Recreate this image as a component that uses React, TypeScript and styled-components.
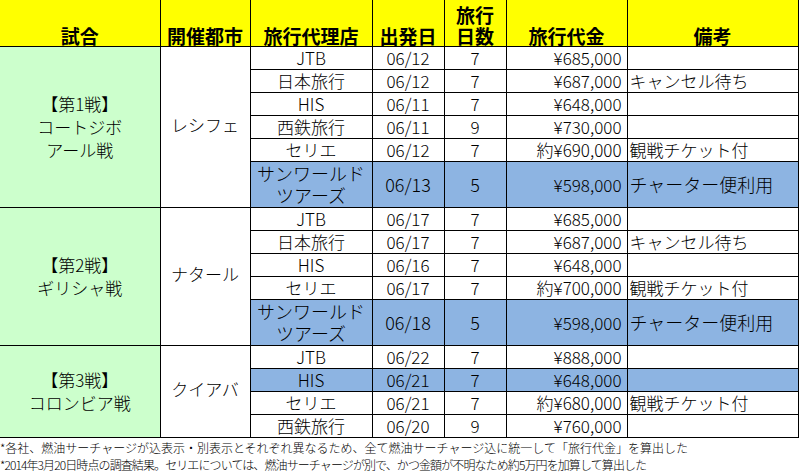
import { createGlobalStyle } from "styled-components";
import styled from "styled-components";

type TourRow = {
  agency: string[];
  date: string;
  days: string;
  price: string;
  note?: string;
  highlight?: boolean;
};

type MatchGroup = {
  match: string[];
  city: string;
  rows: TourRow[];
};

const groups: MatchGroup[] = [
  {
    match: ["【第1戦】", "コートジボ", "アール戦"],
    city: "レシフェ",
    rows: [
      { agency: ["JTB"], date: "06/12", days: "7", price: "¥685,000" },
      { agency: ["日本旅行"], date: "06/12", days: "7", price: "¥687,000", note: "キャンセル待ち" },
      { agency: ["HIS"], date: "06/11", days: "7", price: "¥648,000" },
      { agency: ["西鉄旅行"], date: "06/11", days: "9", price: "¥730,000" },
      { agency: ["セリエ"], date: "06/12", days: "7", price: "約¥690,000", note: "観戦チケット付" },
      {
        agency: ["サンワールド", "ツアーズ"],
        date: "06/13",
        days: "5",
        price: "¥598,000",
        note: "チャーター便利用",
        highlight: true,
      },
    ],
  },
  {
    match: ["【第2戦】", "ギリシャ戦"],
    city: "ナタール",
    rows: [
      { agency: ["JTB"], date: "06/17", days: "7", price: "¥685,000" },
      { agency: ["日本旅行"], date: "06/17", days: "7", price: "¥687,000", note: "キャンセル待ち" },
      { agency: ["HIS"], date: "06/16", days: "7", price: "¥648,000" },
      { agency: ["セリエ"], date: "06/17", days: "7", price: "約¥700,000", note: "観戦チケット付" },
      {
        agency: ["サンワールド", "ツアーズ"],
        date: "06/18",
        days: "5",
        price: "¥598,000",
        note: "チャーター便利用",
        highlight: true,
      },
    ],
  },
  {
    match: ["【第3戦】", "コロンビア戦"],
    city: "クイアバ",
    rows: [
      { agency: ["JTB"], date: "06/22", days: "7", price: "¥888,000" },
      { agency: ["HIS"], date: "06/21", days: "7", price: "¥648,000", highlight: true },
      { agency: ["セリエ"], date: "06/21", days: "7", price: "約¥680,000", note: "観戦チケット付" },
      { agency: ["西鉄旅行"], date: "06/20", days: "9", price: "¥760,000" },
    ],
  },
];

const colWidths = [160, 90, 122, 72, 62, 121, 171];

const GlobalStyle = createGlobalStyle`
  body {
    margin: 0;
    background: #ffffff;
    font-family: "Noto Sans CJK JP", sans-serif;
    font-weight: 300;
    color: #000000;
  }
`;

const Sheet = styled.div`
  width: 799px;
  height: 474px;
  overflow: hidden;
  background: #ffffff;
`;

const Table = styled.table`
  border-collapse: collapse;
  table-layout: fixed;
  width: 798px;
`;

const HeadRow = styled.tr`
  height: 46px;
`;

const BodyRow = styled.tr<{ $tall?: boolean }>`
  height: ${p => (p.$tall ? 46 : 23)}px;
`;

const HeadCell = styled.th<{ $first?: boolean }>`
  background: #ffff00;
  border: 1px solid #000000;
  border-top: none;
  ${p => p.$first && "border-left: none;"}
  padding: 0;
  font-size: 19px;
  font-weight: 700;
  line-height: 21px;
  text-align: center;
  vertical-align: bottom;
`;

const MatchCell = styled.td`
  background: #ccffcc;
  border: 1px solid #000000;
  border-left: none;
  padding: 0;
  font-size: 17px;
  line-height: 23px;
  text-align: center;
  vertical-align: middle;
`;

const CityCell = styled.td`
  background: #ffffff;
  border: 1px solid #000000;
  padding: 0 0 4px;
  font-size: 17px;
  line-height: 22px;
  text-align: center;
  vertical-align: middle;
`;

const Cell = styled.td<{ $align?: "left" | "center" | "right"; $blue?: boolean; $big?: boolean }>`
  background: ${p => (p.$blue ? "#8db4e2" : "#ffffff")};
  border: 1px solid #000000;
  padding: ${p => (p.$align === "right" ? "0 5px 0 0" : p.$align === "left" ? "0 0 0 2px" : "0")};
  font-size: ${p => (p.$big ? 18 : 17)}px;
  line-height: ${p => (p.$big ? 22.5 : 21)}px;
  text-align: ${p => p.$align ?? "center"};
  vertical-align: middle;
  white-space: nowrap;
  overflow: hidden;
`;

const Line = styled.div`
  display: block;
`;

const Notes = styled.div`
  padding-top: 1px;
  font-size: 12px;
  line-height: 17px;
  white-space: nowrap;
`;

const NoteLine = styled.div<{ $tight?: boolean }>`
  letter-spacing: ${p => (p.$tight ? "-0.9px" : "0")};
`;

export default function App() {
  return (
    <Sheet>
      <GlobalStyle />
      <Table>
        <colgroup>
          {colWidths.map((w, i) => (
            <col key={i} style={{ width: w }} />
          ))}
        </colgroup>
        <thead>
          <HeadRow>
            <HeadCell $first>試合</HeadCell>
            <HeadCell>開催都市</HeadCell>
            <HeadCell>旅行代理店</HeadCell>
            <HeadCell>出発日</HeadCell>
            <HeadCell>
              <Line>旅行</Line>
              <Line>日数</Line>
            </HeadCell>
            <HeadCell>旅行代金</HeadCell>
            <HeadCell>備考</HeadCell>
          </HeadRow>
        </thead>
        <tbody>
          {groups.map(g =>
            g.rows.map((r, i) => {
              const tall = r.agency.length > 1;
              return (
                <BodyRow key={g.city + i} $tall={tall}>
                  {i === 0 && (
                    <>
                      <MatchCell rowSpan={g.rows.length}>
                        {g.match.map(m => (
                          <Line key={m}>{m}</Line>
                        ))}
                      </MatchCell>
                      <CityCell rowSpan={g.rows.length}>{g.city}</CityCell>
                    </>
                  )}
                  <Cell $blue={r.highlight} $big={tall}>
                    {r.agency.map(a => (
                      <Line key={a}>{a}</Line>
                    ))}
                  </Cell>
                  <Cell $blue={r.highlight} $big={tall}>{r.date}</Cell>
                  <Cell $blue={r.highlight} $big={tall}>{r.days}</Cell>
                  <Cell $blue={r.highlight} $align="right">{r.price}</Cell>
                  <Cell $blue={r.highlight} $align="left" $big={tall}>
                    {r.note}
                  </Cell>
                </BodyRow>
              );
            })
          )}
        </tbody>
      </Table>
      <Notes>
        <NoteLine>*各社、燃油サーチャージが込表示・別表示とそれぞれ異なるため、全て燃油サーチャージ込に統一して「旅行代金」を算出した</NoteLine>
        <NoteLine $tight>*2014年3月20日時点の調査結果。セリエについては、燃油サーチャージが別で、かつ金額が不明なため約5万円を加算して算出した</NoteLine>
      </Notes>
    </Sheet>
  );
}
